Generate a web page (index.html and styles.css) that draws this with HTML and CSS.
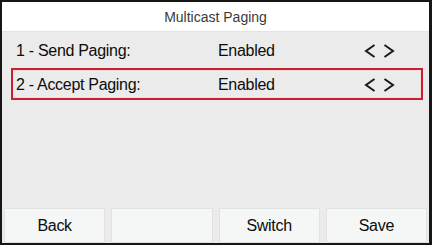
FILE: index.html
```html
<!DOCTYPE html>
<html lang="en">
<head>
  <meta charset="UTF-8" />
  <title>Multicast Paging</title>
  <link rel="stylesheet" href="styles.css">
</head>
<body>
  <div class="screen">
    <div class="title">Multicast Paging</div>

    <div class="list">
      <div class="row">
        <span class="label">1 - Send Paging:</span>
        <span class="value">Enabled</span>
        <span class="arrows">
          <svg width="12" height="16" viewBox="0 0 12 16"><path d="M10.5 2 L2 8 L10.5 14" /></svg>
          <svg width="12" height="16" viewBox="0 0 12 16"><path d="M1.5 2 L10 8 L1.5 14" /></svg>
        </span>
      </div>
      <div class="row selected">
        <span class="label">2 - Accept Paging:</span>
        <span class="value">Enabled</span>
        <span class="arrows">
          <svg width="12" height="16" viewBox="0 0 12 16"><path d="M10.5 2 L2 8 L10.5 14" /></svg>
          <svg width="12" height="16" viewBox="0 0 12 16"><path d="M1.5 2 L10 8 L1.5 14" /></svg>
        </span>
      </div>
    </div>

    <div class="softkeys">
      <div class="key">Back</div>
      <div class="key"></div>
      <div class="key">Switch</div>
      <div class="key">Save</div>
    </div>
  </div>
</body>
</html>
```

FILE: styles.css
```css
body {
  margin: 0;
  font-family: 'Liberation Sans', Arial, sans-serif;
  color: #0c0c0c;
}

.screen {
  width: 432px;
  height: 245px;
  box-sizing: border-box;
  border: 2px solid #161616;
  border-right-width: 3px;
  background-color: #ecebeb;
  display: flex;
  flex-direction: column;
}

.title {
  height: 30px;
  line-height: 30px;
  background-color: #ffffff;
  border-bottom: 1px solid #e4e4e4;
  box-sizing: border-box;
  text-align: center;
  font-size: 14px;
  color: #3a3a3a;
}

.list {
  flex: 1;
  padding: 2px 6px 0 9px;
  display: flex;
  flex-direction: column;
  gap: 2px;
}

.row {
  height: 32px;
  box-sizing: border-box;
  border: 2px solid transparent;
  padding-top: 2px;
  display: flex;
  align-items: center;
  font-size: 16px;
  letter-spacing: -0.3px;
}

.row.selected {
  border-color: #c8202e;
  box-shadow: inset 0 0 0 1px #f3dede;
}

.label {
  width: 202px;
  padding-left: 3px;
}

.value {
  width: 146px;
}

.arrows {
  display: flex;
  gap: 7px;
  margin-top: -1px;
}

.arrows path {
  fill: none;
  stroke: #1a1a1a;
  stroke-width: 2;
}

.softkeys {
  height: 35px;
  padding: 0 2px;
  display: flex;
  gap: 6px;
}

.key {
  flex: 1;
  background-color: #f5f7f6;
  border: 1px solid #e1e3e2;
  display: flex;
  align-items: center;
  justify-content: center;
  font-size: 16px;
  letter-spacing: -0.3px;
  color: #0c0c0c;
}
```
